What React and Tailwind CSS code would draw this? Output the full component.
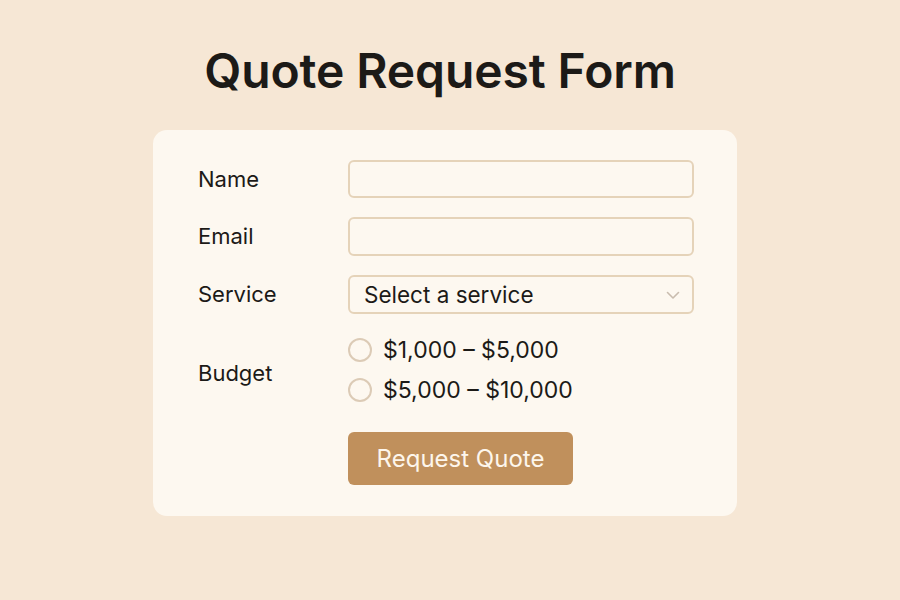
import React, { useState } from 'react';

const budgets = ['$1,000 – $5,000', '$5,000 – $10,000'];

const Field = ({ label, children, labelClass = '' }) => (
    <div className="flex items-center">
        <label className={`w-[150px] text-[22px] text-[#1c1a17] ${labelClass}`}>{label}</label>
        {children}
    </div>
);

export default function App() {
    const [budget, setBudget] = useState(null);

    return (
        <div className="min-h-[600px] w-full bg-[#f6e7d5] font-['Inter',sans-serif]">
            <div className="ml-[153px] w-[584px] pt-[47px]">
                <h1 className="pr-[10px] text-center text-[48px] font-semibold leading-none tracking-[-0.1px] text-[#1c1a17]">
                    Quote Request Form
                </h1>

                <form
                    className="mt-[35px] rounded-[14px] bg-[#fdf8f0] pb-[31px] pl-[45px] pt-[30px]"
                    onSubmit={(e) => e.preventDefault()}
                >
                    <div className="flex flex-col gap-[19px]">
                        <Field label="Name">
                            <input
                                type="text"
                                className="h-[38px] w-[346px] rounded-[6px] border-2 border-[#e5d3b9] bg-[#fdf8f0] px-3 outline-none"
                            />
                        </Field>
                        <Field label="Email">
                            <input
                                type="email"
                                className="h-[39px] w-[346px] rounded-[6px] border-2 border-[#e5d3b9] bg-[#fdf8f0] px-3 outline-none"
                            />
                        </Field>
                        <Field label="Service">
                            <div className="relative flex h-[39px] w-[346px] items-center rounded-[6px] border-2 border-[#e5d3b9] bg-[#fdf8f0] pl-[14px]">
                                <span className="text-[22.5px] text-[#1c1a17]">Select a service</span>
                                <svg
                                    className="absolute right-[12px] top-[14px]"
                                    width="14"
                                    height="9"
                                    viewBox="0 0 14 9"
                                    fill="none"
                                >
                                    <path d="M1.5 1.5L7 7L12.5 1.5" stroke="#c9bcae" strokeWidth="1.6" strokeLinecap="round" strokeLinejoin="round" />
                                </svg>
                            </div>
                        </Field>
                        <Field label="Budget" labelClass="pt-[8px]">
                            <div className="mt-[2px] flex flex-col gap-[10px]">
                                {budgets.map((b) => (
                                    <button
                                        type="button"
                                        key={b}
                                        onClick={() => setBudget(b)}
                                        className="flex h-[30px] items-center gap-[11px] text-left"
                                    >
                                        <span className="flex h-[24px] w-[24px] items-center justify-center rounded-full border-[2.5px] border-[#dccbb6]">
                                            {budget === b && <span className="h-[10px] w-[10px] rounded-full bg-[#c0905c]" />}
                                        </span>
                                        <span className="text-[23px] text-[#1c1a17]">{b}</span>
                                    </button>
                                ))}
                            </div>
                        </Field>
                    </div>

                    <div className="ml-[150px] mt-[27px]">
                        <button
                            type="submit"
                            className="h-[53px] w-[225px] rounded-[6px] bg-[#c0905c] text-[24px] text-[#fdf6ec]"
                        >
                            Request Quote
                        </button>
                    </div>
                </form>
            </div>
        </div>
    );
}
